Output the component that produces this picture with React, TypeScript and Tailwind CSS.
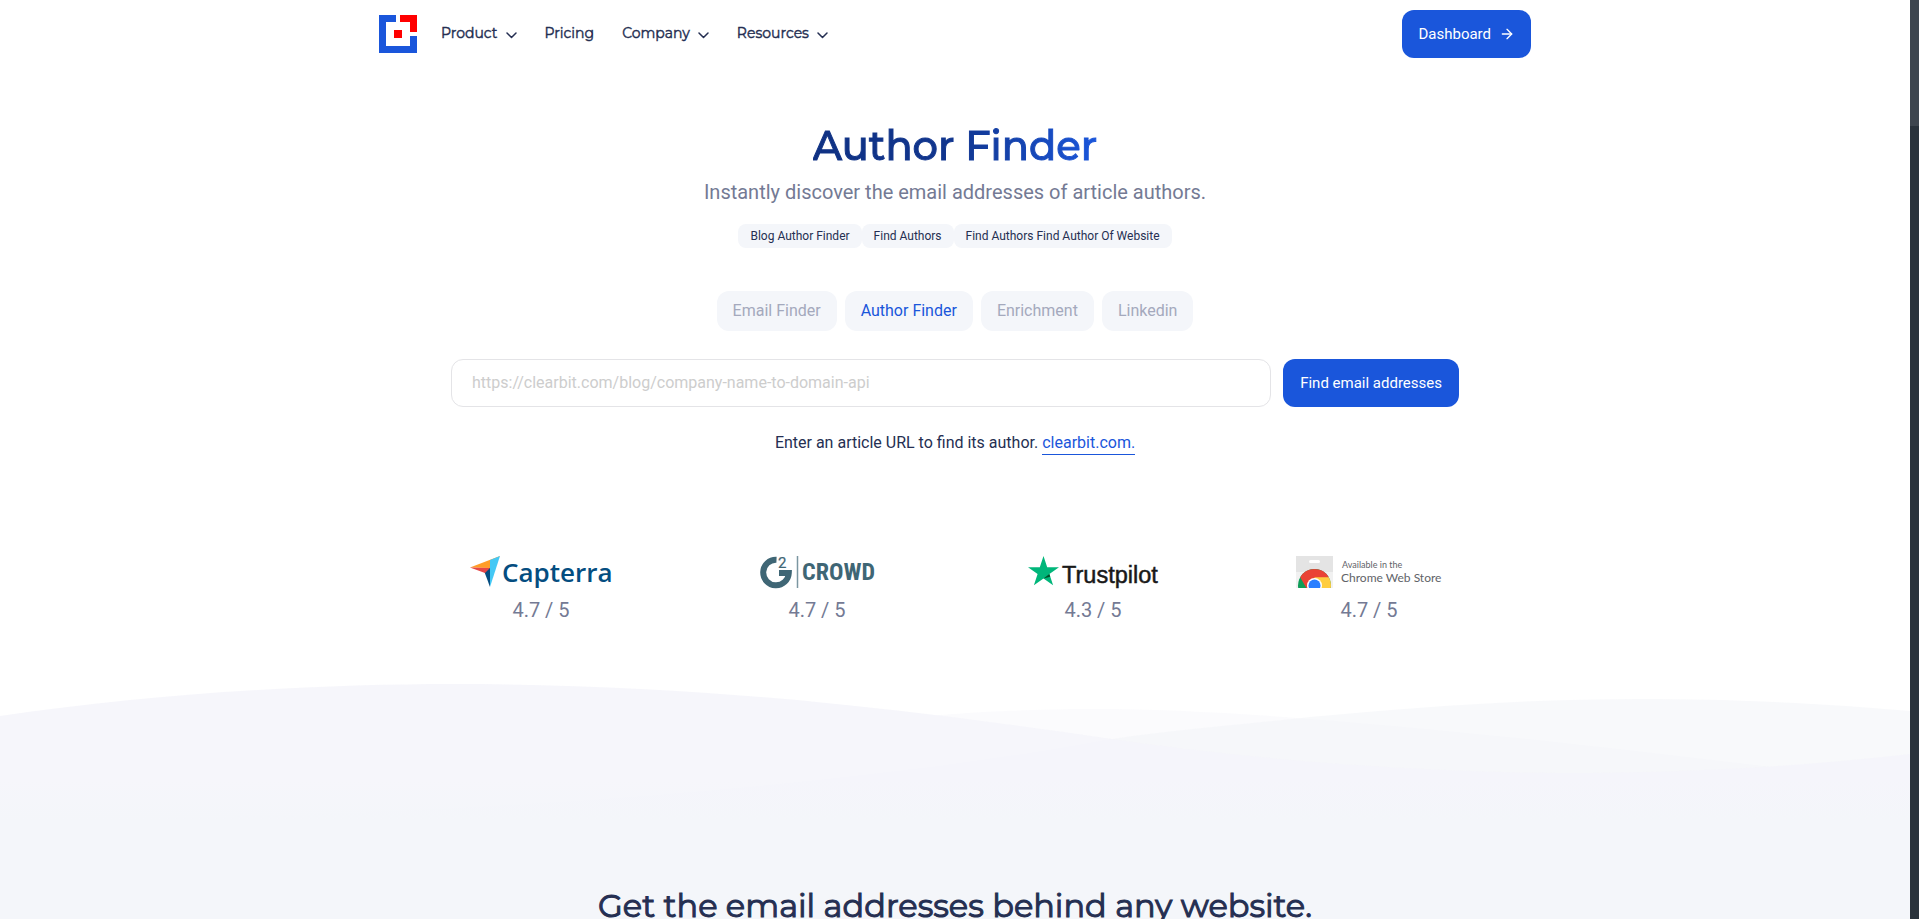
import { ArrowRight } from "lucide-react"

const navItems = [
  { label: "Product", menu: true },
  { label: "Pricing", menu: false },
  { label: "Company", menu: true },
  { label: "Resources", menu: true },
]

const tags = ["Blog Author Finder", "Find Authors", "Find Authors Find Author Of Website"]

const tabs = ["Email Finder", "Author Finder", "Enrichment", "Linkedin"]

const ratings = [
  { name: "Capterra", score: "4.7 / 5", logo: <CapterraLogo /> },
  { name: "G2 Crowd", score: "4.7 / 5", logo: <G2Logo /> },
  { name: "Trustpilot", score: "4.3 / 5", logo: <TrustpilotLogo /> },
  { name: "Chrome Web Store", score: "4.7 / 5", logo: <ChromeStoreLogo /> },
]

function Logo() {
  return (
    <svg width="38" height="38" viewBox="0 0 38 38" aria-hidden="true">
      <path d="M0 0H17V7H7V31H31V21H38V38H0Z" fill="#1a56db" />
      <path d="M21 0H38V17H31V7H21Z" fill="#f00" />
      <path d="M15 15H23V23H15Z" fill="#f00" />
    </svg>
  )
}

function Chevron() {
  return (
    <svg width="11" height="7" viewBox="0 0 11 7" fill="none" className="mt-1" aria-hidden="true">
      <path d="M1 1L5.5 5.5L10 1" stroke="currentColor" strokeWidth="1.5" strokeLinecap="round" strokeLinejoin="round" />
    </svg>
  )
}

function CapterraLogo() {
  return (
    <svg width="142" height="32" viewBox="0 0 142 32" className="overflow-visible" role="img" aria-label="Capterra">
      <path d="M0 11.500L30 0L20 12Z" fill="#ff9d28" />
      <path d="M20 4L20 31L30 0Z" fill="#44c8f5" />
      <path d="M20 12V31L13 12Z" fill="#044d80" />
      <path d="M0 11.500L20 12L15 17Z" fill="#e54747" />
      <text x="32" y="26" fontSize="26" fontWeight="600" fill="#044d80" fontFamily="'Open Sans', sans-serif">Capterra</text>
    </svg>
  )
}

function G2Logo() {
  return (
    <svg width="115" height="32" viewBox="0 0 115 32" className="overflow-visible" role="img" aria-label="G2 Crowd">
      <path d="M16.500 3.700A12.800 12.800 0 1 0 28.800 17H19" fill="none" stroke="#3f6675" strokeWidth="6" />
      <text x="18" y="12" fontSize="15" fill="#3f6675" stroke="#3f6675" strokeWidth="0.2" fontFamily="Roboto, sans-serif">2</text>
      <path d="M37.500 0V32" stroke="#7b96a1" strokeWidth="1.500" />
      <text x="42" y="24" fontSize="24" fontWeight="700" fill="#3f6675" fontFamily="'Roboto Condensed', Roboto, sans-serif">CROWD</text>
    </svg>
  )
}

function TrustpilotLogo() {
  return (
    <svg width="131" height="32" viewBox="0 0 131 32" className="overflow-visible" role="img" aria-label="Trustpilot">
      <path d="M15.500 0L19.200 11.200H31L21.400 18.100L25.100 29.300L15.500 22.400L5.900 29.300L9.600 18.100L0 11.200H11.800Z" fill="#00b67a" />
      <path d="M22.200 20.700L21.400 18.100L15.500 22.400Z" fill="#005128" />
      <text x="34" y="27" fontSize="23.500" fill="#191919" stroke="#191919" strokeWidth="0.5" fontFamily="'Liberation Sans', sans-serif">Trustpilot</text>
    </svg>
  )
}

function ChromeStoreLogo() {
  return (
    <svg width="147" height="32" viewBox="0 0 147 32" role="img" aria-label="Available in the Chrome Web Store">
      <path d="M0 0H37V16H0Z" fill="#e4e4e4" />
      <path d="M0 16H37V32H0Z" fill="#f1f1f1" />
      <rect x="13" y="4" width="11" height="3" rx="1.500" fill="#fff" />
      <circle cx="18.500" cy="29.500" r="16.500" fill="#0f9d58" />
      <path d="M4.200 21.300A16.500 16.500 0 0 1 32.800 21.300L18.500 29.500L11.400 33.800Z" fill="#ea4335" />
      <path d="M18.500 21.300H32.800A16.500 16.500 0 0 1 18.500 46Z" fill="#ffcd40" />
      <circle cx="18.500" cy="29.500" r="7.500" fill="#fff" />
      <circle cx="18.500" cy="29.500" r="6" fill="#2a7fff" />
      <text x="46" y="12" fontSize="9" fill="#5f6368" fontFamily="Lato, sans-serif">Available in the</text>
      <text x="45" y="26" fontSize="12" fill="#5f6368" fontFamily="Lato, sans-serif">Chrome Web Store</text>
    </svg>
  )
}

function Header() {
  return (
    <header className="mx-auto flex h-[68px] w-full max-w-6xl items-center justify-between">
      <div className="flex items-center gap-6">
        <a href="#" aria-label="Home">
          <Logo />
        </a>
        <nav className="flex items-center gap-7 pb-0.5 font-['Montserrat',Inter,sans-serif] text-sm text-[#252f52] [-webkit-text-stroke:0.03em]">
          {navItems.map((item) =>
            item.menu ? (
              <button key={item.label} className="flex items-center gap-2">
                {item.label}
                <Chevron />
              </button>
            ) : (
              <a key={item.label} href="#">
                {item.label}
              </a>
            ),
          )}
        </nav>
      </div>
      <a href="#" className="flex h-12 items-center gap-2 rounded-xl bg-[#1a56db] px-4 text-[15px] text-white">
        Dashboard
        <ArrowRight size={16} />
      </a>
    </header>
  )
}

function Finder() {
  return (
    <section className="mx-auto flex w-full max-w-[1008px] flex-col items-center">
      <h1 className="mt-13 bg-linear-to-r from-[#0f3183] via-[#11368f] to-[#1a56db] bg-clip-text font-['Montserrat',Inter,sans-serif] text-[40px] leading-[52px] font-medium text-transparent [-webkit-text-stroke:1px_transparent]">
        Author Finder
      </h1>
      <p className="mt-1 text-xl leading-8 text-[#747a94]">Instantly discover the email addresses of article authors.</p>
      <div className="mt-4 flex">
        {tags.map((tag) => (
          <span key={tag} className="rounded-lg bg-[#f4f6fa] px-3 text-xs leading-6 text-[#252f52]">
            {tag}
          </span>
        ))}
      </div>
      <div className="mt-[43px] flex gap-2">
        {tabs.map((tab) => (
          <button
            key={tab}
            className={`h-10 rounded-xl bg-[#f4f6fa] px-4 ${tab === "Author Finder" ? "text-[#1a56db]" : "text-[#a4a9bd]"}`}
          >
            {tab}
          </button>
        ))}
      </div>
      <form className="mt-7 flex w-full gap-3" onSubmit={(e) => e.preventDefault()}>
        <input
          type="url"
          aria-label="Article URL"
          placeholder="https://clearbit.com/blog/company-name-to-domain-api"
          className="h-12 min-w-0 flex-1 rounded-xl border border-[#e4e4e7] px-5 pb-0.5 placeholder:text-[#cdcdcd]"
        />
        <button className="h-12 rounded-xl bg-[#1a56db] px-[17px] text-[15px] text-white">Find email addresses</button>
      </form>
      <p className="mt-6 text-[#252f52]">
        Enter an article URL to find its author.{" "}
        <a href="#" className="border-b border-[#1a56db] pb-0.5 text-[#1a56db]">
          clearbit.com.
        </a>
      </p>
    </section>
  )
}

function Ratings() {
  return (
    <section className="mx-auto mt-[101px] grid w-full max-w-6xl grid-cols-4 px-6">
      {ratings.map((r) => (
        <div key={r.name} className="flex flex-col items-center gap-1">
          {r.logo}
          <p className="text-xl leading-9 text-[#747a94]">{r.score}</p>
        </div>
      ))}
    </section>
  )
}

/* three overlapping translucent layers, fading into the section below */
function Waves() {
  return (
    <svg className="mt-14 block h-[136px] w-full" viewBox="0 0 1910 136" preserveAspectRatio="none" aria-hidden="true">
      <defs>
        <linearGradient id="wave-base" x1="0" y1="0" x2="0" y2="1">
          <stop offset="0" stopColor="#f4f6fa" stopOpacity="0" />
          <stop offset="1" stopColor="#f4f6fa" />
        </linearGradient>
      </defs>
      <path d="M0 56C110 38 240 34 330 34C460 34 560 52 675 52C800 52 900 25 1095 25C1270 25 1540 55 1764 82L1910 98V136H0Z" fill="#f4f4fa" fillOpacity="0.400" />
      <path d="M0 136C500 136 900 95 1112 55C1180 45 1240 41 1310 33C1430 22 1530 15 1640 15C1740 15 1830 20 1910 27V136H0Z" fill="#f4f5f9" fillOpacity="0.600" />
      <path d="M0 32C150 10 310 0 455 0C730 0 950 32 1112 55C1300 82 1460 89 1590 89C1720 88 1820 80 1910 70V136H0Z" fill="#f4f4fa" fillOpacity="0.850" />
      <rect y="96" width="1910" height="40" fill="url(#wave-base)" />
    </svg>
  )
}

export default function App() {
  return (
    <div className="flex h-screen overflow-hidden bg-white font-[Roboto,sans-serif] text-base">
      <main className="h-full min-w-0 flex-1 overflow-hidden">
        <Header />
        <Finder />
        <Ratings />
        <Waves />
        <section className="bg-[#f4f6fa] pt-16 pb-20 text-center">
          <h2 className="font-['Montserrat',Inter,sans-serif] text-[32px] leading-11 text-[#252f52] [-webkit-text-stroke:1px]">
            Get the email addresses behind any website.
          </h2>
        </section>
      </main>
      {/* scrollbar */}
      <div className="w-[9px] bg-[#29323b]" aria-hidden="true">
        <div className="h-[126px] bg-[#3d454e]" />
      </div>
    </div>
  )
}
